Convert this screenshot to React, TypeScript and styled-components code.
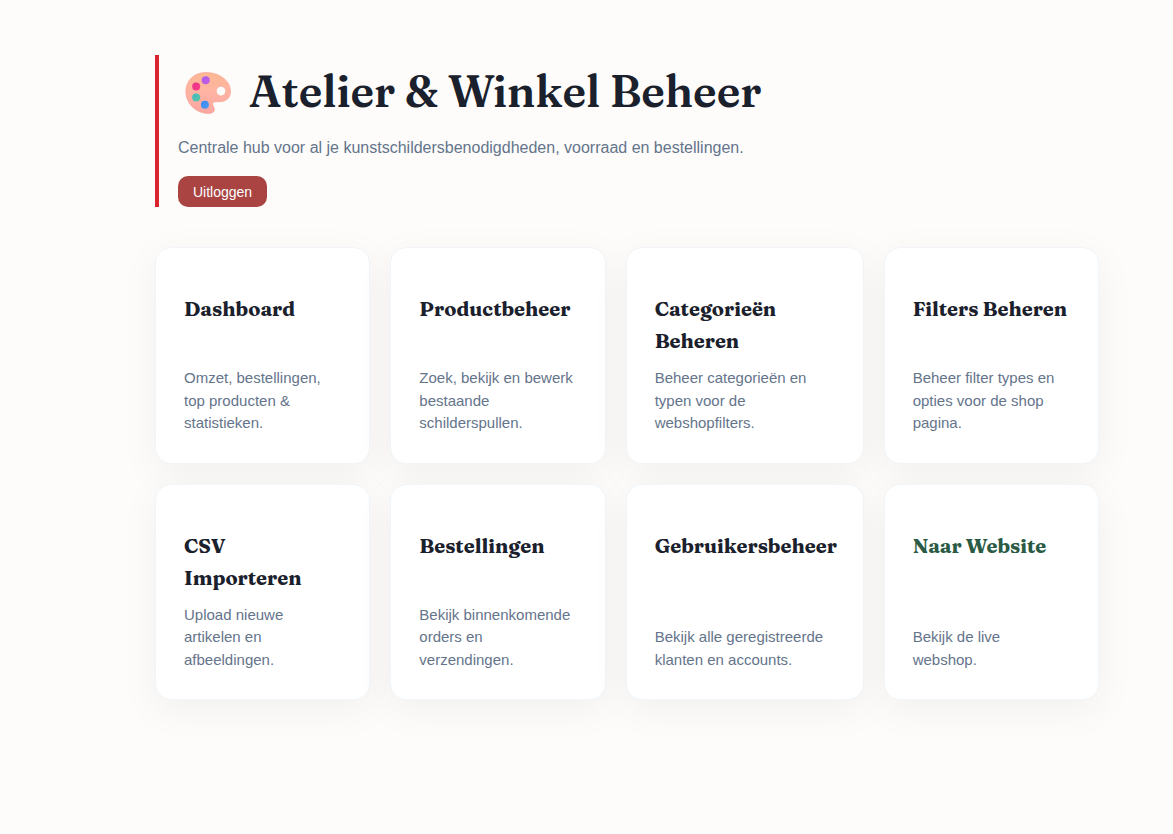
import React from "react";
import styled, { createGlobalStyle } from "styled-components";

const GlobalStyle = createGlobalStyle`
  *, *::before, *::after { box-sizing: border-box; }
  body {
    margin: 0;
    background: #fdfcfa;
    color: #1a202c;
    font-family: "Liberation Sans", Arial, sans-serif;
    font-size: 16px;
  }
  h1, h2, p { margin: 0; }
`;

const serif = `Fraunces, "Liberation Serif", "Times New Roman", serif`;

const Page = styled.main`
  padding: 55px 74px 55px 155px;
`;

const Header = styled.header`
  display: flex;
  flex-direction: column;
  align-items: flex-start;
  margin-bottom: 40px;
  padding-left: 19px;
  border-left: 4px solid #d9232e;
`;

const Title = styled.h1`
  display: flex;
  align-items: center;
  gap: 17px;
  margin-bottom: 8px;
  font-family: ${serif};
  font-size: 44px;
  font-weight: 600;
  line-height: 72px;
`;

const PaletteIcon = styled.svg`
  flex: none;
  width: 48px;
  height: 48px;
  margin-left: 6px;
`;

const Lead = styled.p`
  margin-bottom: 15px;
  color: #64748b;
  line-height: 26px;
`;

const LogoutButton = styled.button`
  height: 31px;
  padding: 0 15px;
  border: 0;
  border-radius: 10px;
  background: #a94442;
  color: #fff;
  font-family: inherit;
  font-size: 14px;
  cursor: pointer;
`;

const Grid = styled.nav`
  display: grid;
  grid-template-columns: 1fr 1fr minmax(238px, 1fr) 1fr;
  gap: 20px;
`;

const Card = styled.a`
  display: flex;
  flex-direction: column;
  justify-content: space-between;
  gap: 10px;
  padding: 45px 28px 28px;
  border: 1px solid #f1f5f9;
  border-radius: 16px;
  background: #fff;
  box-shadow: 0 10px 40px rgba(0, 0, 0, 0.05);
  color: inherit;
  text-decoration: none;
`;

const CardTitle = styled.h2<{ $accent?: boolean }>`
  color: ${(p) => (p.$accent ? "#2a5a44" : "#1a202c")};
  font-family: ${serif};
  font-size: 20px;
  font-weight: 700;
  line-height: 32px;
`;

const CardText = styled.p`
  padding-right: 3px;
  color: #64748b;
  font-size: 15px;
  line-height: 1.5;
`;

const cards = [
  { title: "Dashboard", text: "Omzet, bestellingen, top producten & statistieken." },
  { title: "Productbeheer", text: "Zoek, bekijk en bewerk bestaande schilderspullen." },
  { title: "Categorieën Beheren", text: "Beheer categorieën en typen voor de webshopfilters." },
  { title: "Filters Beheren", text: "Beheer filter types en opties voor de shop pagina." },
  { title: "CSV Importeren", text: "Upload nieuwe artikelen en afbeeldingen." },
  { title: "Bestellingen", text: "Bekijk binnenkomende orders en verzendingen." },
  { title: "Gebruikersbeheer", text: "Bekijk alle geregistreerde klanten en accounts." },
  { title: "Naar Website", text: "Bekijk de live webshop.", accent: true },
];

function Palette() {
  return (
    <PaletteIcon viewBox="0 -4 48 48" aria-hidden="true">
      <defs>
        <linearGradient id="board" x1="0" y1="0" x2="0" y2="1">
          <stop offset="0" stopColor="#fcb893" />
          <stop offset="0.5" stopColor="#ffb3a3" />
          <stop offset="1" stopColor="#fba6a2" />
        </linearGradient>
        <linearGradient id="purple" x1="0" y1="0" x2="1" y2="1">
          <stop offset="0" stopColor="#a95df0" />
          <stop offset="1" stopColor="#c65ae0" />
        </linearGradient>
        <linearGradient id="pink" x1="0" y1="0" x2="1" y2="1">
          <stop offset="0" stopColor="#e8308c" />
          <stop offset="1" stopColor="#fa4088" />
        </linearGradient>
        <linearGradient id="teal" x1="0" y1="0" x2="1" y2="1">
          <stop offset="0" stopColor="#39bcc4" />
          <stop offset="1" stopColor="#65c3a3" />
        </linearGradient>
        <linearGradient id="blue" x1="0" y1="0" x2="1" y2="1">
          <stop offset="0" stopColor="#3689f2" />
          <stop offset="1" stopColor="#519bf5" />
        </linearGradient>
      </defs>
      <path
        fill="url(#board)"
        stroke="#f7a091"
        strokeWidth="0.6"
        fillRule="evenodd"
        d="M22 1.5C34.500 1.500 46.500 9 46.500 20.500C46.500 27.500 41.500 30.700 36 30.700C32 30.700 28.700 30.500 28.700 33C28.700 35 30.400 36 30.400 38.500C30.400 41.300 27.500 42.500 24.500 42.500C13 42.500 1.800 33.500 1.800 20.500C1.800 9.500 10 1.500 22 1.500ZM37 15.300A4.800 4.800 0 1 0 37 24.900A4.800 4.800 0 1 0 37 15.300Z"
      />
      <circle cx="21.700" cy="9.300" r="4" fill="url(#purple)" />
      <circle cx="12.200" cy="15.500" r="4" fill="url(#pink)" />
      <circle cx="12.200" cy="26.500" r="4" fill="url(#teal)" />
      <circle cx="20.900" cy="33.700" r="4" fill="url(#blue)" />
    </PaletteIcon>
  );
}

export default function App() {
  return (
    <>
      <GlobalStyle />
      <Page>
        <Header>
          <Title>
            <Palette />
            Atelier &amp; Winkel Beheer
          </Title>
          <Lead>Centrale hub voor al je kunstschildersbenodigdheden, voorraad en bestellingen.</Lead>
          <LogoutButton type="button">Uitloggen</LogoutButton>
        </Header>
        <Grid aria-label="Beheer">
          {cards.map((card) => (
            <Card key={card.title} href="#">
              <CardTitle $accent={card.accent}>{card.title}</CardTitle>
              <CardText>{card.text}</CardText>
            </Card>
          ))}
        </Grid>
      </Page>
    </>
  );
}
